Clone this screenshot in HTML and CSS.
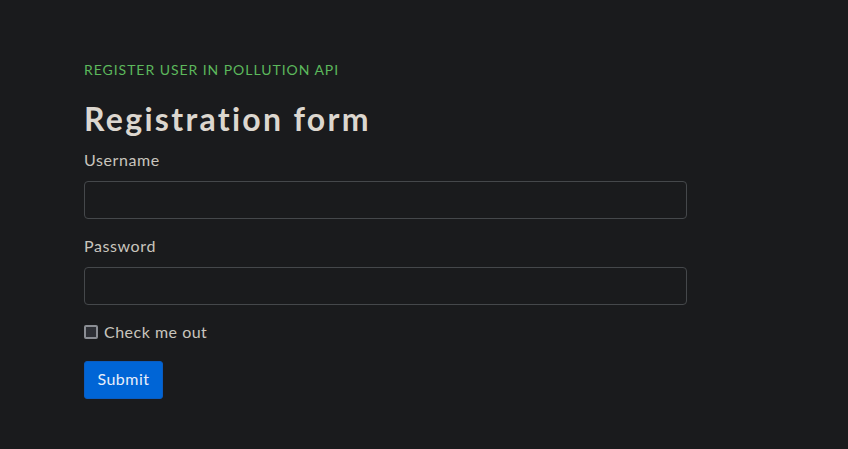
FILE: index.html
```html
<!DOCTYPE html>
<html>
<head>
<meta charset="utf-8">
<link rel="stylesheet" href="styles.css">
</head>
<body>
<main class="page">
  <p class="eyebrow">REGISTER USER IN POLLUTION API</p>
  <h1 class="title">Registration form</h1>
  <form class="form">
    <div class="field">
      <label class="label" for="u">Username</label>
      <input class="input" id="u" type="text">
    </div>
    <div class="field">
      <label class="label" for="p">Password</label>
      <input class="input" id="p" type="password">
    </div>
    <div class="check">
      <span class="box"></span>
      <span class="check-label">Check me out</span>
    </div>
    <button class="btn" type="button">Submit</button>
  </form>
</main>
</body>
</html>
```
FILE: styles.css
```css
html, body {
  margin: 0;
  padding: 0;
  background: #1a1b1d;
}
body {
  font-family: Lato, "Open Sans", sans-serif;
  color: #c9c5bd;
}
.page {
  padding: 61px 0 0 84px;
  width: 603px;
}
.eyebrow {
  margin: 0;
  font-size: 14px;
  line-height: 18px;
  color: #5cb85c;
  letter-spacing: 0.95px;
}
.title {
  margin: 21px 0 0;
  font-size: 32px;
  line-height: 38px;
  font-weight: 700;
  color: #dcd7cf;
  letter-spacing: 2.3px;
}
.form {
  display: flex;
  flex-direction: column;
  align-items: flex-start;
  margin-top: 10px;
}
.field {
  display: flex;
  flex-direction: column;
  width: 100%;
  margin-bottom: 15px;
}
.label {
  font-size: 16px;
  line-height: 24px;
  margin-bottom: 9px;
  color: #c9c5bd;
  letter-spacing: 0.6px;
}
.input {
  box-sizing: border-box;
  width: 100%;
  height: 38px;
  background: #1a1b1d;
  border: 1px solid #45484b;
  border-radius: 4px;
}
.check {
  display: flex;
  align-items: center;
  gap: 6px;
  margin-top: 0;
  height: 24px;
}
.box {
  box-sizing: border-box;
  width: 14px;
  height: 14px;
  border: 2px solid #8a8d93;
  background: #2e3036;
  border-radius: 2px;
}
.check-label {
  font-size: 16px;
  line-height: 24px;
  letter-spacing: 0.5px;
}
.btn {
  margin-top: 17px;
  box-sizing: border-box;
  width: 79px;
  height: 38px;
  background: #0065d6;
  border: 1px solid #0a5cc0;
  border-radius: 3px;
  color: #e8eefa;
  font-family: inherit;
  font-size: 16px;
  letter-spacing: 0.5px;
  padding: 0 0 3px;
}
```
